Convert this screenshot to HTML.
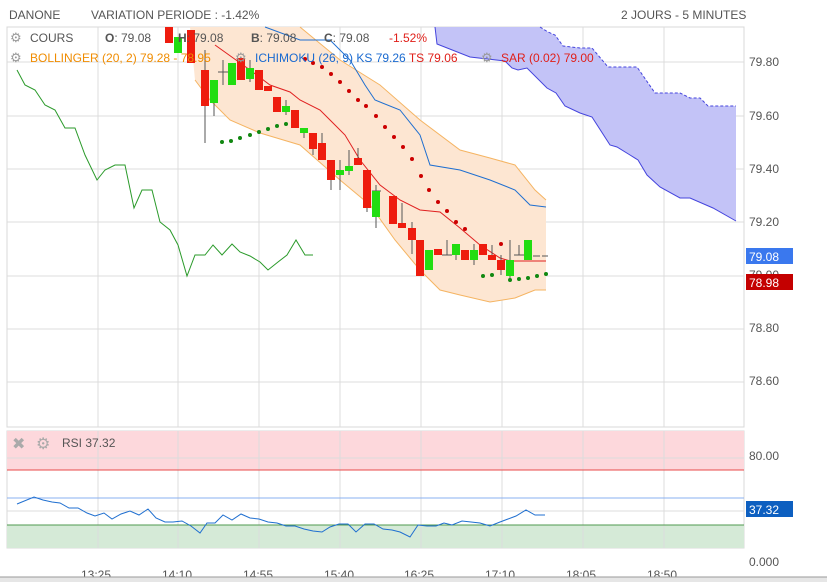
<!DOCTYPE html>
<html><head><meta charset="utf-8"><style>
body{margin:0;width:827px;height:582px;background:#fff;overflow:hidden;font-family:"Liberation Sans",sans-serif}
svg{position:absolute;left:0;top:0}
</style></head><body>
<svg width="827" height="582" viewBox="0 0 827 582" xmlns="http://www.w3.org/2000/svg" font-family="Liberation Sans, sans-serif">
<!-- main frame -->
<rect x="7" y="27" width="737" height="400" fill="#fff" stroke="#d8d8d8"/>
<g stroke="#dcdcdc" stroke-width="1">
<line x1="7" y1="62" x2="744" y2="62"/><line x1="7" y1="116" x2="744" y2="116"/><line x1="7" y1="169" x2="744" y2="169"/><line x1="7" y1="222" x2="744" y2="222"/><line x1="7" y1="276" x2="744" y2="276"/><line x1="7" y1="329" x2="744" y2="329"/><line x1="7" y1="382" x2="744" y2="382"/>
<line x1="98" y1="27" x2="98" y2="427"/><line x1="178" y1="27" x2="178" y2="427"/><line x1="259" y1="27" x2="259" y2="427"/><line x1="340" y1="27" x2="340" y2="427"/><line x1="421" y1="27" x2="421" y2="427"/><line x1="502" y1="27" x2="502" y2="427"/><line x1="583" y1="27" x2="583" y2="427"/><line x1="664" y1="27" x2="664" y2="427"/>
</g>
<!-- cloud -->
<path d="M435,27 L540,27 L548,32 L555,35 L563,46 L580,48 L592,48 L608,67 L637,67 L655,93 L680,93 L690,98 L700,98 L708,106 L736,106 L736,221 L713,208 L690,198 L680,198 L660,187 L647,175 L638,160 L630,155 L617,147 L610,145 L592,117 L580,113 L565,106 L556,93 L547,88 L527,68 L518,70 L512,68 L505,61 L470,57 L437,44 Z" fill="#c3c3f7"/>
<path d="M540,27 L548,32 L555,35 L563,46 L580,48 L592,48 L608,67 L637,67 L655,93 L680,93 L690,98 L700,98 L708,106 L736,106" fill="none" stroke="#4444dd" stroke-dasharray="3,2"/>
<path d="M435,27 L437,44 L470,57 L505,61 L512,68 L518,70 L527,68 L547,88 L556,93 L565,106 L580,113 L592,117 L610,145 L617,147 L630,155 L638,160 L647,175 L660,187 L680,198 L690,198 L713,208 L736,221" fill="none" stroke="#4444dd"/>
<!-- bollinger -->
<path d="M190,27 L300,27 L340,60 L380,85 L420,120 L460,150 L490,158 L515,165 L535,190 L546,200 L546,290 L535,290 L515,298 L490,302 L460,295 L440,290 L420,270 L395,240 L370,205 L340,180 L300,145 L260,133 L230,120 L210,100 L195,80 Z" fill="#fde6d2"/>
<path d="M300,27 L340,60 L380,85 L420,120 L460,150 L490,158 L515,165 L535,190 L546,200" fill="none" stroke="#f5b462"/>
<path d="M195,80 L210,100 L230,120 L260,133 L300,145 L340,180 L370,205 L395,240 L420,270 L440,290 L460,295 L490,302 L515,298 L535,290 L546,290" fill="none" stroke="#f5b462"/>
<!-- green old line -->
<path d="M17,70 L25,85 L35,90 L45,105 L55,110 L65,128 L75,128 L85,155 L97,180 L105,170 L115,165 L125,165 L134,208 L142,190 L152,190 L160,222 L170,230 L178,245 L187,276 L195,255 L205,255 L213,245 L222,255 L232,244 L240,252 L250,256 L260,262 L268,270 L278,262 L287,255 L296,240 L305,255 L313,255" fill="none" stroke="#2a9a2a"/>
<!-- ichimoku -->
<path d="M265,27 L300,40 L330,40 L350,60 L365,85 L375,100 L400,110 L420,135 L430,165 L460,170 L490,180 L515,190 L530,205 L546,207" fill="none" stroke="#1f6fd0"/>
<path d="M215,45 L250,70 L270,85 L290,92 L300,100 L320,110 L330,120 L345,135 L360,160 L380,185 L400,200 L420,210 L440,212 L460,228 L480,245 L500,258 L510,261 L546,261" fill="none" stroke="#e02020"/>
<!-- candles -->
<g stroke="#555" stroke-width="1">
<line x1="205" y1="50" x2="205" y2="143"/><line x1="214" y1="80" x2="214" y2="116"/><line x1="223" y1="60" x2="223" y2="85"/><line x1="218" y1="72" x2="228" y2="72"/><line x1="250" y1="60" x2="250" y2="82"/><line x1="286" y1="100" x2="286" y2="115"/><line x1="304" y1="128" x2="304" y2="138"/><line x1="313" y1="133" x2="313" y2="155"/><line x1="322" y1="133" x2="322" y2="160"/><line x1="331" y1="160" x2="331" y2="190"/><line x1="340" y1="160" x2="340" y2="190"/><line x1="349" y1="150" x2="349" y2="175"/><line x1="358" y1="148" x2="358" y2="165"/><line x1="367" y1="170" x2="367" y2="212"/><line x1="376" y1="185" x2="376" y2="228"/><line x1="372" y1="191" x2="381" y2="191"/><line x1="393" y1="196" x2="393" y2="224"/><line x1="402" y1="203" x2="402" y2="228"/><line x1="412" y1="222" x2="412" y2="254"/><line x1="447" y1="240" x2="447" y2="255"/><line x1="442" y1="255" x2="452" y2="255"/><line x1="456" y1="244" x2="456" y2="260"/><line x1="474" y1="244" x2="474" y2="265"/><line x1="492" y1="245" x2="492" y2="260"/><line x1="501" y1="255" x2="501" y2="275"/><line x1="510" y1="240" x2="510" y2="282"/><line x1="519" y1="245" x2="519" y2="255"/><line x1="514" y1="255" x2="524" y2="255"/><line x1="533" y1="256" x2="540" y2="256"/><line x1="542" y1="256" x2="548" y2="256"/>
</g>
<g fill="#ee1c0e">
<rect x="165" y="27" width="8" height="16"/><rect x="187" y="30" width="8" height="33"/><rect x="201" y="70" width="8" height="36"/><rect x="237" y="58" width="8" height="22"/><rect x="255" y="70" width="8" height="20"/><rect x="264" y="86" width="8" height="5"/><rect x="273" y="97" width="8" height="15"/><rect x="291" y="110" width="8" height="18"/><rect x="309" y="133" width="8" height="16"/><rect x="318" y="143" width="8" height="17"/><rect x="327" y="160" width="8" height="20"/><rect x="354" y="158" width="8" height="7"/><rect x="363" y="170" width="8" height="38"/><rect x="389" y="196" width="8" height="28"/><rect x="398" y="223" width="8" height="5"/><rect x="408" y="228" width="8" height="12"/><rect x="416" y="240" width="8" height="36"/><rect x="434" y="249" width="8" height="6"/><rect x="461" y="250" width="8" height="10"/><rect x="479" y="244" width="8" height="11"/><rect x="488" y="255" width="8" height="5"/><rect x="497" y="260" width="8" height="10"/>
</g>
<g fill="#22dd11">
<rect x="174" y="37" width="8" height="16"/><rect x="210" y="80" width="8" height="23"/><rect x="228" y="63" width="8" height="22"/><rect x="246" y="68" width="8" height="11"/><rect x="282" y="106" width="8" height="6"/><rect x="300" y="128" width="8" height="5"/><rect x="336" y="170" width="8" height="5"/><rect x="345" y="166" width="8" height="5"/><rect x="372" y="191" width="8" height="26"/><rect x="425" y="250" width="8" height="20"/><rect x="452" y="244" width="8" height="11"/><rect x="470" y="250" width="8" height="10"/><rect x="506" y="260" width="8" height="16"/><rect x="524" y="240" width="8" height="20"/>
</g>
<!-- SAR dots -->
<g fill="#cc0000">
<circle cx="305" cy="59" r="2"/><circle cx="313" cy="63" r="2"/><circle cx="322" cy="67" r="2"/><circle cx="331" cy="74" r="2"/><circle cx="340" cy="82" r="2"/><circle cx="349" cy="91" r="2"/><circle cx="358" cy="100" r="2"/><circle cx="366" cy="106" r="2"/><circle cx="376" cy="116" r="2"/><circle cx="385" cy="127" r="2"/><circle cx="394" cy="137" r="2"/><circle cx="403" cy="147" r="2"/><circle cx="412" cy="159" r="2"/><circle cx="421" cy="176" r="2"/><circle cx="429" cy="190" r="2"/><circle cx="438" cy="202" r="2"/><circle cx="447" cy="211" r="2"/><circle cx="456" cy="222" r="2"/><circle cx="465" cy="229" r="2"/><circle cx="501" cy="244" r="2"/>
</g>
<g fill="#118811">
<circle cx="222" cy="142" r="2"/><circle cx="231" cy="141" r="2"/><circle cx="240" cy="138" r="2"/><circle cx="250" cy="135" r="2"/><circle cx="259" cy="132" r="2"/><circle cx="268" cy="129" r="2"/><circle cx="277" cy="126" r="2"/><circle cx="286" cy="124" r="2"/><circle cx="483" cy="276" r="2"/><circle cx="492" cy="275" r="2"/><circle cx="510" cy="280" r="2"/><circle cx="519" cy="279" r="2"/><circle cx="528" cy="278" r="2"/><circle cx="537" cy="276" r="2"/><circle cx="546" cy="274" r="2"/>
</g>
<!-- header texts -->
<g font-size="12" fill="#555">
<text x="9" y="19">DANONE</text><text x="91" y="19">VARIATION PERIODE : -1.42%</text><text x="621" y="19">2 JOURS - 5 MINUTES</text>
<text x="30" y="42">COURS</text>
<text x="105" y="42"><tspan font-weight="bold">O</tspan>: 79.08</text><text x="178" y="42"><tspan font-weight="bold">H</tspan>: 79.08</text><text x="251" y="42"><tspan font-weight="bold">B</tspan>: 79.08</text><text x="324" y="42"><tspan font-weight="bold">C</tspan>: 79.08</text>
<text x="389" y="42" fill="#e0201a">-1.52%</text>
<text x="30" y="62" fill="#f08c00">BOLLINGER (20, 2)  79.28 - 78.95</text>
<text x="255" y="62" fill="#1a6ad0">ICHIMOKU (26, 9)  KS 79.26 <tspan fill="#e0201a">TS 79.06</tspan></text>
<text x="501" y="62" fill="#e0201a">SAR (0.02)  79.00</text>
</g>
<g fill="#999" font-size="13">
<text x="10" y="42">⚙</text><text x="10" y="62">⚙</text><text x="235" y="62">⚙</text><text x="481" y="62">⚙</text>
</g>
<!-- right axis -->
<g font-size="12" fill="#555">
<text x="749" y="66">79.80</text><text x="749" y="120">79.60</text><text x="749" y="173">79.40</text><text x="749" y="226">79.20</text><text x="749" y="279">79.00</text><text x="749" y="332">78.80</text><text x="749" y="385">78.60</text>
</g>
<rect x="746" y="248" width="47" height="16" fill="#3a78ee"/><text x="749" y="261" font-size="12" fill="#fff">79.08</text>
<rect x="746" y="274" width="47" height="16" fill="#c40000"/><text x="749" y="287" font-size="12" fill="#fff">78.98</text>
<!-- RSI -->
<rect x="7" y="431" width="737" height="117" fill="#fff" stroke="#d8d8d8"/>
<rect x="7" y="431" width="737" height="39" fill="#fdd8dc"/>
<rect x="7" y="525" width="737" height="23" fill="#d5ead7"/>
<g stroke="#dcdcdc">
<line x1="98" y1="431" x2="98" y2="548"/><line x1="178" y1="431" x2="178" y2="548"/><line x1="259" y1="431" x2="259" y2="548"/><line x1="340" y1="431" x2="340" y2="548"/><line x1="421" y1="431" x2="421" y2="548"/><line x1="502" y1="431" x2="502" y2="548"/><line x1="583" y1="431" x2="583" y2="548"/><line x1="664" y1="431" x2="664" y2="548"/>
<line x1="7" y1="458" x2="744" y2="458"/><line x1="7" y1="511" x2="744" y2="511"/>
</g>
<line x1="7" y1="470" x2="744" y2="470" stroke="#e84a4a"/>
<line x1="7" y1="498" x2="744" y2="498" stroke="#8ab0f0"/>
<line x1="7" y1="525" x2="744" y2="525" stroke="#4f9a4f"/>
<path d="M17,504 L34,497 L43,500 L52,502 L60,503 L69,508 L78,508 L87,513 L95,516 L104,513 L112,519 L121,514 L130,511 L139,515 L148,509 L156,518 L165,522 L173,522 L182,521 L191,526 L200,533 L207,523 L215,523 L223,515 L232,520 L241,514 L250,518 L259,519 L268,522 L277,523 L286,526 L295,526 L304,529 L313,531 L322,532 L330,527 L339,524 L348,524 L356,532 L365,524 L374,524 L383,529 L392,530 L400,532 L410,537 L418,525 L427,526 L436,526 L444,523 L452,525 L462,521 L471,522 L480,523 L490,526 L500,522 L508,519 L516,516 L526,510 L535,515 L545,515" fill="none" stroke="#1f6fd0"/>
<text x="12" y="449" font-size="16" fill="#aaa">✖</text><text x="36" y="449" font-size="16" fill="#aaa">⚙</text>
<text x="62" y="447" font-size="12" fill="#555">RSI <tspan fill="#555">37.32</tspan></text>
<g font-size="12" fill="#555"><text x="749" y="460">80.00</text><text x="749" y="566">0.000</text></g>
<rect x="746" y="501" width="47" height="16" fill="#0d5fc0"/><text x="749" y="514" font-size="12" fill="#fff">37.32</text>
<!-- time axis -->
<g font-size="12" fill="#555" text-anchor="middle">
<text x="96" y="579">13:25</text><text x="177" y="579">14:10</text><text x="258" y="579">14:55</text><text x="339" y="579">15:40</text><text x="419" y="579">16:25</text><text x="500" y="579">17:10</text><text x="581" y="579">18:05</text><text x="662" y="579">18:50</text>
</g>
<rect x="0" y="577" width="827" height="5" fill="#e6e6e6"/><line x1="0" y1="577" x2="827" y2="577" stroke="#999"/>
</svg>
</body></html>
